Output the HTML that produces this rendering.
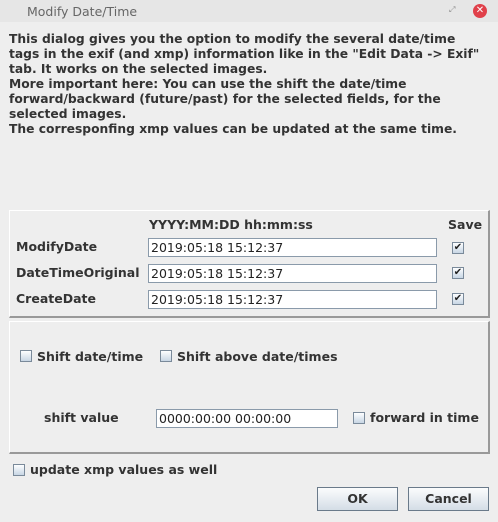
<!DOCTYPE html>
<html><head><style>
body{margin:0;width:498px;height:522px;background:#eeeeee;font-family:"DejaVu Sans","Liberation Sans",sans-serif;color:#333;position:relative;overflow:hidden}
.a{position:absolute}
.b{font-weight:bold;font-size:12.5px;white-space:nowrap;color:#333}
.title{left:0;top:0;width:498px;height:22px;background:#e6e6e6}
.panel{border-top:1px solid #fff;border-left:1px solid #fff;border-right:2px solid #999;border-bottom:2px solid #999;box-sizing:border-box}
.tf{background:#fff;border:1px solid #8a9aaa;box-sizing:border-box;height:19px;font-size:12.5px;padding:1px 2px;white-space:nowrap;color:#222}
.cb{width:12px;height:12px;border:1px solid #7a8a9a;background:linear-gradient(#fdfeff,#c8d6e4);box-sizing:border-box}
.ck{font-size:10px;line-height:10px;text-align:center;color:#222;font-weight:bold}
.btn{border:1px solid #6a7a8a;background:linear-gradient(#fbfcfd,#d4dde6);box-sizing:border-box;height:24px;text-align:center;line-height:22px}
</style></head><body>
<div class="a title"></div>
<div class="a" style="left:27px;top:4px;font-size:12.5px;color:#666">Modify Date/Time</div>
<div class="a" style="left:449px;top:5px;font-size:8px;color:#888">⤢</div>
<div class="a" style="left:473px;top:4px;width:14px;height:14px;border-radius:7px;background:#e0404a;color:#fff;font-size:10px;line-height:14px;text-align:center;font-weight:bold">✕</div>
<div class="a b" style="left:9px;top:32px;line-height:15px;font-size:12.3px">This dialog gives you the option to modify the several date/time<br>tags in the exif (and xmp) information like in the "Edit Data -&gt; Exif"<br>tab. It works on the selected images.<br>More important here: You can use the shift the date/time<br>forward/backward (future/past) for the selected fields, for the<br>selected images.<br>The corresponfing xmp values can be updated at the same time.</div>

<div class="a panel" style="left:9px;top:210px;width:481px;height:108px"></div>
<div class="a b" style="left:149px;top:217px">YYYY:MM:DD hh:mm:ss</div>
<div class="a b" style="left:448px;top:217px">Save</div>
<div class="a b" style="left:16px;top:239px">ModifyDate</div>
<div class="a b" style="left:16px;top:265px">DateTimeOriginal</div>
<div class="a b" style="left:16px;top:291px">CreateDate</div>
<div class="a tf" style="left:148px;top:238px;width:289px">2019:05:18 15:12:37</div>
<div class="a tf" style="left:148px;top:264px;width:289px">2019:05:18 15:12:37</div>
<div class="a tf" style="left:148px;top:290px;width:289px">2019:05:18 15:12:37</div>
<div class="a cb ck" style="left:452px;top:242px">✔</div>
<div class="a cb ck" style="left:452px;top:267px">✔</div>
<div class="a cb ck" style="left:452px;top:293px">✔</div>

<div class="a panel" style="left:9px;top:321px;width:481px;height:133px"></div>
<div class="a cb" style="left:20px;top:350px"></div>
<div class="a b" style="left:37px;top:349px">Shift date/time</div>
<div class="a cb" style="left:160px;top:350px"></div>
<div class="a b" style="left:177px;top:349px">Shift above date/times</div>
<div class="a b" style="left:44px;top:410px">shift value</div>
<div class="a tf" style="left:156px;top:409px;width:182px">0000:00:00 00:00:00</div>
<div class="a cb" style="left:353px;top:412px"></div>
<div class="a b" style="left:370px;top:410px">forward in time</div>

<div class="a cb" style="left:13px;top:464px"></div>
<div class="a b" style="left:30px;top:462px">update xmp values as well</div>
<div class="a btn b" style="left:317px;top:487px;width:81px">OK</div>
<div class="a btn b" style="left:408px;top:487px;width:81px">Cancel</div>
</body></html>
